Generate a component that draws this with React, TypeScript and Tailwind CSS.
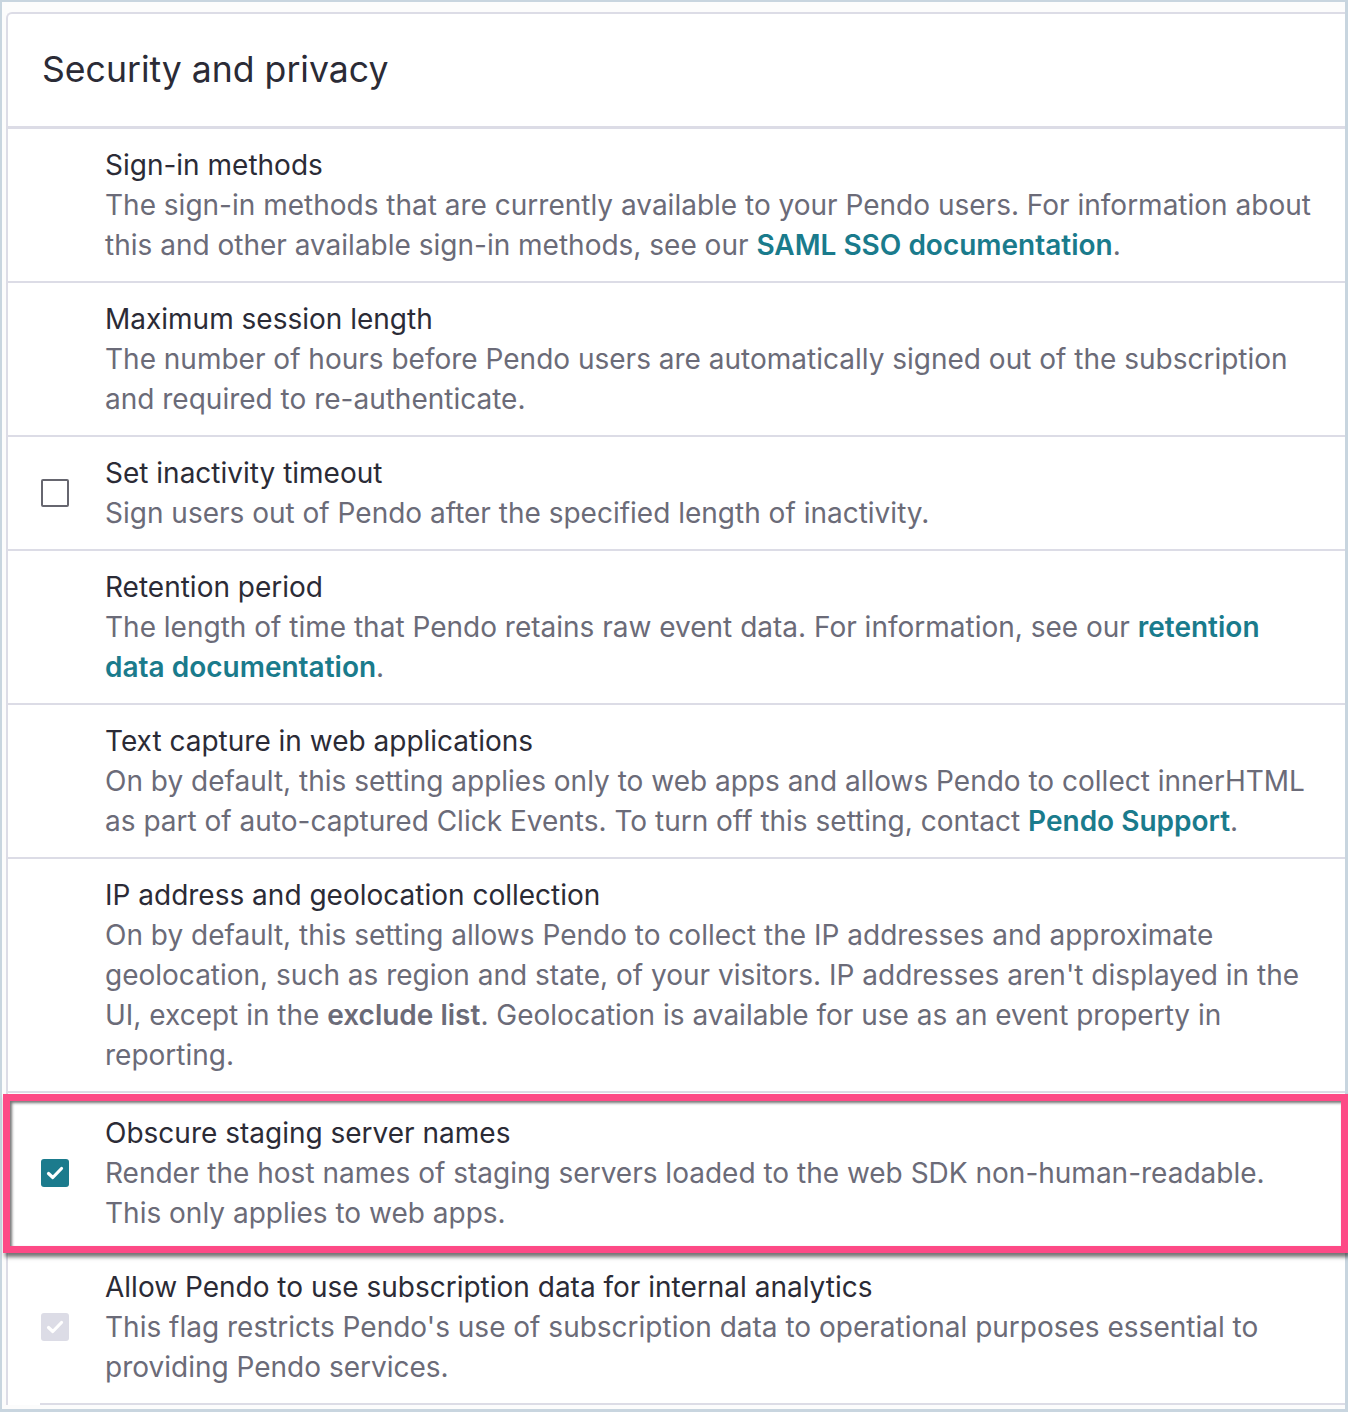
import React from "react";

const F = { fontFamily: "Inter, 'Noto Sans', sans-serif" };

function Check({ color }: { color: string }) {
  return (
    <svg width="28" height="28" viewBox="0 0 28 28" className="block">
      <rect x="0" y="0" width="28" height="28" rx="3" fill={color} />
      <polyline points="7.5,14.5 11.8,18.5 20.5,9.5" fill="none" stroke="#ffffff" strokeWidth="3.2" strokeLinecap="round" strokeLinejoin="round" />
    </svg>
  );
}

function Empty() {
  return <div className="w-[28px] h-[28px] border-2 border-[#66666f] rounded-[2px] bg-white" />;
}

function Link({ children }: { children: React.ReactNode }) {
  return <span className="font-semibold text-[#1a7b8c]">{children}</span>;
}

function Row({
  box,
  title,
  children,
  extra,
  last,
}: {
  box?: React.ReactNode;
  title: string;
  children: React.ReactNode;
  extra?: boolean;
  last?: boolean;
}) {
  return (
    <div className={`relative flex items-center pl-[33px] ${extra ? "pt-[20px]" : "pt-4"} pb-4 ${last ? "" : "border-b-2 border-[#dcdce6]"}`}>
      <div className="w-[28px] h-[28px] shrink-0">{box}</div>
      <div className="ml-[36px] w-[1212px] text-[28px] leading-[40px]">
        <p className="text-[#2b2b36]">{title}</p>
        <p className="text-[#6b6b78]">{children}</p>
      </div>
      {extra && (
        <div className="absolute top-[1px] -left-[5px] -right-[3px] -bottom-[4px] border-[7px] border-[#fd4a86] shadow-[inset_2px_2px_3px_rgba(0,0,0,0.55),2px_4px_4px_rgba(0,0,0,0.55)] pointer-events-none" />
      )}
    </div>
  );
}

export default function App() {
  return (
    <div style={F} className="relative w-[1348px] h-[1412px] box-border border-l-2 border-t-2 border-r-[3px] border-b-[3px] border-[#c8d5df] bg-[#fcfcfc] pl-[4px] pt-[10px]">
      <div className="bg-white border-l-2 border-t-2 border-[#dcdce6] rounded-tl-[6px]">
        <div className="h-[115px] border-b-[3px] border-[#dcdce6] flex items-center pl-[34px]">
          <h1 className="text-[35.6px] text-[#2b2b36] leading-none">Security and privacy</h1>
        </div>
        <Row title="Sign-in methods">
          The sign-in methods that are currently available to your Pendo users. For information about this and other available sign-in methods, see our <Link>SAML SSO documentation</Link>.
        </Row>
        <Row title="Maximum session length">
          The number of hours before Pendo users are automatically signed out of the subscription and required to re-authenticate.
        </Row>
        <Row box={<Empty />} title="Set inactivity timeout">
          Sign users out of Pendo after the specified length of inactivity.
        </Row>
        <Row title="Retention period">
          The length of time that Pendo retains raw event data. For information, see our <Link>retention data documentation</Link>.
        </Row>
        <Row title="Text capture in web applications">
          On by default, this setting applies only to web apps and allows Pendo to collect innerHTML as part of auto-captured Click Events. To turn off this setting, contact <Link>Pendo Support</Link>.
        </Row>
        <Row title="IP address and geolocation collection">
          On by default, this setting allows Pendo to collect the IP addresses and approximate geolocation, such as region and state, of your visitors. IP addresses aren't displayed in the UI, except in the <span className="font-semibold">exclude list</span>. Geolocation is available for use as an event property in reporting.
        </Row>
        <Row box={<Check color="#1b7b8d" />} title="Obscure staging server names" extra>
          Render the host names of staging servers loaded to the web SDK non-human-readable. This only applies to web apps.
        </Row>
        <Row box={<Check color="#dcdce6" />} title="Allow Pendo to use subscription data for internal analytics" last>
          This flag restricts Pendo's use of subscription data to operational purposes essential to providing Pendo services.
        </Row>
        <div className="ml-[32px] h-[2px] bg-[#dcdce6]" />
      </div>
    </div>
  );
}
